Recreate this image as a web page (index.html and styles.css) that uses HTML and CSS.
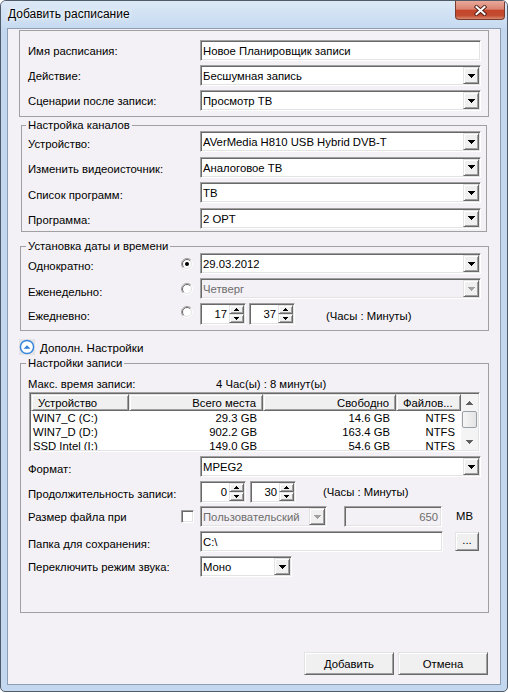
FILE: index.html
```html
<!DOCTYPE html>
<html lang="ru">
<head>
<meta charset="utf-8">
<title>Добавить расписание</title>
<link rel="stylesheet" href="styles.css">
</head>
<body>
<div class="window">
  <div class="titlebar">
    <span class="title">Добавить расписание</span>
    <div class="close"><svg width="13" height="11" viewBox="0 0 13 11"><path d="M2.5 2 L10.5 9 M10.5 2 L2.5 9" stroke="#4a1c14" stroke-width="3.8" stroke-linecap="square"/><path d="M2.5 2 L10.5 9 M10.5 2 L2.5 9" stroke="#fff" stroke-width="2" stroke-linecap="square"/></svg></div>
  </div>
  <div class="client">
    <div class="box box-a">
      <div class="row"><span class="lbl">Имя расписания:</span><div class="field w281"><span class="val">Новое Планировщик записи</span></div></div>
      <div class="row"><span class="lbl">Действие:</span><div class="field w281"><span class="val">Бесшумная запись</span><span class="dd"><svg width="7" height="4" viewBox="0 0 7 4"><path d="M0 0h7v1H0zM1 1h5v1H1zM2 2h3v1H2zM3 3h1v1H3z"/></svg></span></div></div>
      <div class="row"><span class="lbl">Сценарии после записи:</span><div class="field w281"><span class="val">Просмотр ТВ</span><span class="dd"><svg width="7" height="4" viewBox="0 0 7 4"><path d="M0 0h7v1H0zM1 1h5v1H1zM2 2h3v1H2zM3 3h1v1H3z"/></svg></span></div></div>
    </div>

    <fieldset class="box box-b">
      <legend>Настройка каналов</legend>
      <div class="row"><span class="lbl low">Устройство:</span><div class="field w281"><span class="val">AVerMedia H810 USB Hybrid DVB-T</span><span class="dd"><svg width="7" height="4" viewBox="0 0 7 4"><path d="M0 0h7v1H0zM1 1h5v1H1zM2 2h3v1H2zM3 3h1v1H3z"/></svg></span></div></div>
      <div class="row"><span class="lbl low">Изменить видеоисточник:</span><div class="field w281"><span class="val">Аналоговое ТВ</span><span class="dd"><svg width="7" height="4" viewBox="0 0 7 4"><path d="M0 0h7v1H0zM1 1h5v1H1zM2 2h3v1H2zM3 3h1v1H3z"/></svg></span></div></div>
      <div class="row"><span class="lbl low">Список программ:</span><div class="field w281"><span class="val">ТВ</span><span class="dd"><svg width="7" height="4" viewBox="0 0 7 4"><path d="M0 0h7v1H0zM1 1h5v1H1zM2 2h3v1H2zM3 3h1v1H3z"/></svg></span></div></div>
      <div class="row"><span class="lbl low">Программа:</span><div class="field w281"><span class="val">2 OPT</span><span class="dd"><svg width="7" height="4" viewBox="0 0 7 4"><path d="M0 0h7v1H0zM1 1h5v1H1zM2 2h3v1H2zM3 3h1v1H3z"/></svg></span></div></div>
    </fieldset>

    <fieldset class="box box-c">
      <legend>Установка даты и времени</legend>
      <div class="row"><span class="lbl low short">Однократно:</span>
        <span class="radio"><svg width="12" height="12" viewBox="0 0 12 12"><circle cx="6" cy="6" r="5" fill="#fff"/><path d="M2.1 9.9A5.5 5.5 0 0 1 9.9 2.1" fill="none" stroke="#a0a0a0"/><path d="M9.9 2.1A5.5 5.5 0 0 1 2.1 9.9" fill="none" stroke="#fff"/><path d="M2.8 9.2A4.5 4.5 0 0 1 9.2 2.8" fill="none" stroke="#696969"/><path d="M9.2 2.8A4.5 4.5 0 0 1 2.8 9.2" fill="none" stroke="#e3e3e3"/><circle cx="6" cy="6" r="2" fill="#000"/></svg></span>
        <div class="field w281"><span class="val">29.03.2012</span><span class="dd"><svg width="7" height="4" viewBox="0 0 7 4"><path d="M0 0h7v1H0zM1 1h5v1H1zM2 2h3v1H2zM3 3h1v1H3z"/></svg></span></div></div>
      <div class="row"><span class="lbl lower short">Еженедельно:</span>
        <span class="radio"><svg width="12" height="12" viewBox="0 0 12 12"><circle cx="6" cy="6" r="5" fill="#fff"/><path d="M2.1 9.9A5.5 5.5 0 0 1 9.9 2.1" fill="none" stroke="#a0a0a0"/><path d="M9.9 2.1A5.5 5.5 0 0 1 2.1 9.9" fill="none" stroke="#fff"/><path d="M2.8 9.2A4.5 4.5 0 0 1 9.2 2.8" fill="none" stroke="#696969"/><path d="M9.2 2.8A4.5 4.5 0 0 1 2.8 9.2" fill="none" stroke="#e3e3e3"/></svg></span>
        <div class="field w281 disabled"><span class="val">Четверг</span><span class="dd"><svg width="7" height="4" viewBox="0 0 7 4"><path fill="#a0a0a0" d="M0 0h7v1H0zM1 1h5v1H1zM2 2h3v1H2zM3 3h1v1H3z"/></svg></span></div></div>
      <div class="row"><span class="lbl low short">Ежедневно:</span>
        <span class="radio up"><svg width="12" height="12" viewBox="0 0 12 12"><circle cx="6" cy="6" r="5" fill="#fff"/><path d="M2.1 9.9A5.5 5.5 0 0 1 9.9 2.1" fill="none" stroke="#a0a0a0"/><path d="M9.9 2.1A5.5 5.5 0 0 1 2.1 9.9" fill="none" stroke="#fff"/><path d="M2.8 9.2A4.5 4.5 0 0 1 9.2 2.8" fill="none" stroke="#696969"/><path d="M9.2 2.8A4.5 4.5 0 0 1 2.8 9.2" fill="none" stroke="#e3e3e3"/></svg></span>
        <div class="spin"><span class="spin-val">17</span><span class="spin-btns"><span class="sb"><svg width="5" height="3" viewBox="0 0 5 3"><path d="M2 0h1v1H2zM1 1h3v1H1zM0 2h5v1H0z"/></svg></span><span class="sb"><svg width="5" height="3" viewBox="0 0 5 3"><path d="M0 0h5v1H0zM1 1h3v1H1zM2 2h1v1H2z"/></svg></span></span></div>
        <div class="spin gap3"><span class="spin-val">37</span><span class="spin-btns"><span class="sb"><svg width="5" height="3" viewBox="0 0 5 3"><path d="M2 0h1v1H2zM1 1h3v1H1zM0 2h5v1H0z"/></svg></span><span class="sb"><svg width="5" height="3" viewBox="0 0 5 3"><path d="M0 0h5v1H0zM1 1h3v1H1zM2 2h1v1H2z"/></svg></span></span></div>
        <span class="hint hint-c">(Часы : Минуты)</span>
      </div>
    </fieldset>

    <div class="expander">
      <span class="exp-icon"><svg width="16" height="16" viewBox="0 0 16 16"><rect width="16" height="16" fill="#e4e4e6"/><circle cx="8" cy="8" r="6.6" fill="#fff" stroke="#3a86dc" stroke-width="1.5"/><path d="M4.6 9.8 L8 6.2 L11.4 9.8 Z" fill="#2f7dd6"/></svg></span>
      <span>Дополн. Настройки</span>
    </div>

    <fieldset class="box box-d">
      <legend>Настройки записи</legend>
      <div class="info"><span class="info-lbl">Макс. время записи:</span><span>4 Час(ы) : 8 минут(ы)</span></div>
      <div class="lv">
        <div class="lv-main">
          <div class="lv-head">
            <span class="hc c1">Устройство</span>
            <span class="hc c2 r">Всего места</span>
            <span class="hc c3 r">Свободно</span>
            <span class="hc c4">Файлов...</span>
          </div>
          <div class="lv-row"><span class="c1 cell">WIN7_C (C:)</span><span class="c2 cell r">29.3 GB</span><span class="c3 cell r">14.6 GB</span><span class="c4 cell r">NTFS</span></div>
          <div class="lv-row"><span class="c1 cell">WIN7_D (D:)</span><span class="c2 cell r">902.2 GB</span><span class="c3 cell r">163.4 GB</span><span class="c4 cell r">NTFS</span></div>
          <div class="lv-row"><span class="c1 cell">SSD Intel (I:)</span><span class="c2 cell r">149.0 GB</span><span class="c3 cell r">54.6 GB</span><span class="c4 cell r">NTFS</span></div>
        </div>
        <div class="sbar">
          <span class="sarrow"><svg width="7" height="4" viewBox="0 0 7 4"><path fill="#606060" d="M3 0h1v1H3zM2 1h3v1H2zM1 2h5v1H1zM0 3h7v1H0z"/></svg></span>
          <span class="thumb"></span>
          <span class="strack"></span>
          <span class="sarrow"><svg width="7" height="4" viewBox="0 0 7 4"><path fill="#606060" d="M0 0h7v1H0zM1 1h5v1H1zM2 2h3v1H2zM3 3h1v1H3z"/></svg></span>
        </div>
      </div>
      <div class="rows">
        <div class="row"><span class="lbl low">Формат:</span><div class="field w281"><span class="val">MPEG2</span><span class="dd"><svg width="7" height="4" viewBox="0 0 7 4"><path d="M0 0h7v1H0zM1 1h5v1H1zM2 2h3v1H2zM3 3h1v1H3z"/></svg></span></div></div>
        <div class="row"><span class="lbl low">Продолжительность записи:</span>
          <div class="spin"><span class="spin-val">0</span><span class="spin-btns"><span class="sb"><svg width="5" height="3" viewBox="0 0 5 3"><path d="M2 0h1v1H2zM1 1h3v1H1zM0 2h5v1H0z"/></svg></span><span class="sb"><svg width="5" height="3" viewBox="0 0 5 3"><path d="M0 0h5v1H0zM1 1h3v1H1zM2 2h1v1H2z"/></svg></span></span></div>
          <div class="spin gap4"><span class="spin-val">30</span><span class="spin-btns"><span class="sb"><svg width="5" height="3" viewBox="0 0 5 3"><path d="M2 0h1v1H2zM1 1h3v1H1zM0 2h5v1H0z"/></svg></span><span class="sb"><svg width="5" height="3" viewBox="0 0 5 3"><path d="M0 0h5v1H0zM1 1h3v1H1zM2 2h1v1H2z"/></svg></span></span></div>
          <span class="hint hint-d">(Часы : Минуты)</span>
        </div>
        <div class="row"><span class="lbl short">Размер файла при</span>
          <span class="check"></span>
          <div class="field w127 disabled"><span class="val">Пользовательский</span><span class="dd"><svg width="7" height="4" viewBox="0 0 7 4"><path fill="#a0a0a0" d="M0 0h7v1H0zM1 1h5v1H1zM2 2h3v1H2zM3 3h1v1H3z"/></svg></span></div>
          <div class="field w98 disabled num"><span class="val">650</span></div>
          <span class="mb">MB</span>
        </div>
        <div class="row"><span class="lbl low">Папка для сохранения:</span><div class="field w243"><span class="val">C:\</span></div><span class="btn small">...</span></div>
        <div class="row"><span class="lbl">Переключить режим звука:</span><div class="field w92"><span class="val">Моно</span><span class="dd"><svg width="7" height="4" viewBox="0 0 7 4"><path d="M0 0h7v1H0zM1 1h5v1H1zM2 2h3v1H2zM3 3h1v1H3z"/></svg></span></div></div>
      </div>
    </fieldset>

    <div class="buttons">
      <span class="btn big">Добавить</span>
      <span class="btn big">Отмена</span>
    </div>
  </div>
</div>
</body>
</html>
```

FILE: styles.css
```css
* { box-sizing: border-box; }
html, body { margin: 0; padding: 0; background: #fff; }
body { font-family: "Liberation Sans", Arial, sans-serif; font-size: 11.3px; color: #000; }

.window {
  width: 508px; height: 692px;
  border: 1px solid #505b69; border-radius: 6px 6px 5px 5px;
  background: #c3d8ef;
  display: flex; flex-direction: column; overflow: hidden;
}
.titlebar {
  height: 27px; flex: none;
  display: flex; justify-content: space-between; align-items: flex-start;
  padding-left: 7px;
  background: linear-gradient(#dce9f7, #c6daf0);
}
.title { font-size: 12px; line-height: 27px; text-shadow: 0 0 6px #fff, 0 0 3px #fff; }
.close {
  width: 50px; height: 19px; margin-right: 2px;
  border: 1px solid #7a3a2e; border-top: none; border-radius: 0 0 4px 4px;
  background: linear-gradient(#eaa89a 0%, #d98470 45%, #c5462c 52%, #c24a30 80%, #d98a6c 100%);
  display: flex; align-items: center; justify-content: center;
}
.client {
  flex: 1; margin: 0 6px 6px;
  border: 1px solid #8d9db3;
  background: #f3f1f5;
  display: flex; flex-direction: column;
}

.box { border: 1px solid #a0a0a0; display: flex; flex-direction: column; min-width: 0; }
.box legend { padding: 0 2px; margin-left: -2px; line-height: 13px; margin-bottom: -1px; }
.box-a { margin: 1px 11px 0; padding: 9px 7px 5px 8px; gap: 4px; }
.box-b { margin: 2px 0 0 13px; width: 466px; padding: 0 5px 2.5px 6px; gap: 4.5px; }
.box-c { margin: 8px 0 0 12px; width: 469px; padding: 1px 7px 6px 7px; gap: 4px; }
.box-d { margin: 2px 0 0 12px; width: 469px; padding: 8px 7px 35px 7px; }

.row { display: flex; align-items: center; height: 21px; }
.lbl { width: 172px; flex: none; white-space: nowrap; }
.lbl.short { width: 153px; }
.lbl.low { padding-top: 4px; }
.lbl.lower { padding-top: 7px; }

.field {
  height: 21px; flex: none;
  background: #fff;
  border: 1px solid; border-color: #a0a0a0 #fff #fff #a0a0a0;
  box-shadow: inset 1px 1px 0 #696969, inset -1px -1px 0 #e3e3e3;
  display: flex; align-items: center;
  padding-left: 2px; white-space: nowrap; overflow: hidden;
}
.field .val { flex: 1; padding-top: 1px; }
.field.disabled { background: #f3f1f5; color: #6d6d6d; }
.field.num .val { text-align: right; padding-right: 3px; }
.w281 { width: 281px; }
.w127 { width: 127px; }
.w98 { width: 98px; margin-left: 17px; }
.w243 { width: 243px; }
.w92 { width: 92px; }

.dd, .sb, .btn, .hc {
  background: #f0f0f0;
  border: 1px solid; border-color: #e3e3e3 #696969 #696969 #e3e3e3;
  box-shadow: inset 1px 1px 0 #fff, inset -1px -1px 0 #a0a0a0;
}
.dd {
  width: 16px; height: 17px; margin: 0 1px 0 auto; flex: none;
  display: flex; align-items: center; justify-content: center;
}
.dd svg, .sb svg, .sarrow svg { display: block; shape-rendering: crispEdges; }

.radio { width: 12px; height: 12px; margin-right: 7px; flex: none; }
.radio svg { display: block; }
.radio.up { margin-top: -3px; }

.spin {
  width: 46px; height: 22px; flex: none;
  background: #fff;
  border: 1px solid; border-color: #a0a0a0 #fff #fff #a0a0a0;
  box-shadow: inset 1px 1px 0 #696969, inset -1px -1px 0 #e3e3e3;
  display: flex;
}
.spin.gap3 { margin-left: 3px; }
.spin.gap4 { margin-left: 4px; }
.spin-val { flex: 1; text-align: right; padding-right: 2px; line-height: 20px; }
.spin-btns { width: 15px; margin: 1px 1px 1px 0; display: flex; flex-direction: column; }
.sb { flex: 1; display: flex; align-items: center; justify-content: center; }

.hint { white-space: nowrap; padding-top: 4px; }
.hint-c { margin-left: 31px; }
.hint-d { margin-left: 27px; padding-top: 0; }

.expander { margin: 8px 0 0 11px; height: 16px; display: flex; align-items: center; gap: 5px; font-size: 11.6px; }
.exp-icon svg { display: block; }

.info { height: 14px; display: flex; align-items: center; white-space: nowrap; }
.info-lbl { width: 188px; }

.lv {
  margin: 1px 0 0 1px; width: 451px; height: 60px; flex: none;
  background: #fff;
  border: 1px solid; border-color: #a0a0a0 #fff #fff #a0a0a0;
  box-shadow: inset 1px 1px 0 #696969, inset -1px -1px 0 #e3e3e3;
  padding: 1px;
  display: flex; overflow: hidden;
}
.lv-main { width: 430px; flex: none; overflow: hidden; }
.lv-head { display: flex; height: 17px; }
.hc { height: 17px; display: flex; align-items: center; padding: 0 6px; white-space: nowrap; }
.hc.r { justify-content: flex-end; }
.c1 { width: 98px; }
.c2 { width: 134px; }
.c3 { width: 133px; }
.c4 { width: 65px; }
.lv-row { display: flex; height: 14px; }
.cell { display: block; line-height: 14px; white-space: nowrap; padding: 0 6px 0 2px; }
.cell.r { text-align: right; }
.sbar { width: 17px; flex: none; background: #f4f4f4; display: flex; flex-direction: column; }
.sarrow { height: 17px; flex: none; display: flex; align-items: center; justify-content: center; }
.thumb {
  height: 17px; flex: none; margin: 0 1px;
  border: 1px solid #9a9fa6; border-radius: 2px;
  background: linear-gradient(90deg, #f6f6f6, #e4e4e4);
}
.strack { flex: 1; }

.rows { display: flex; flex-direction: column; gap: 4px; margin-top: 4px; }
.check {
  width: 13px; height: 13px; margin-right: 6px; flex: none;
  background: #fff;
  border: 1px solid; border-color: #a0a0a0 #fff #fff #a0a0a0;
  box-shadow: inset 1px 1px 0 #696969, inset -1px -1px 0 #e3e3e3;
}
.mb { margin-left: 14px; padding-bottom: 2px; }

.btn { display: flex; align-items: center; justify-content: center; flex: none; }
.btn.small { width: 24px; height: 19px; margin-left: 12px; padding-bottom: 3px; }
.buttons { display: flex; justify-content: flex-end; gap: 4px; margin: 39px 12px 0 0; }
.btn.big { width: 90px; height: 23px; }
```
